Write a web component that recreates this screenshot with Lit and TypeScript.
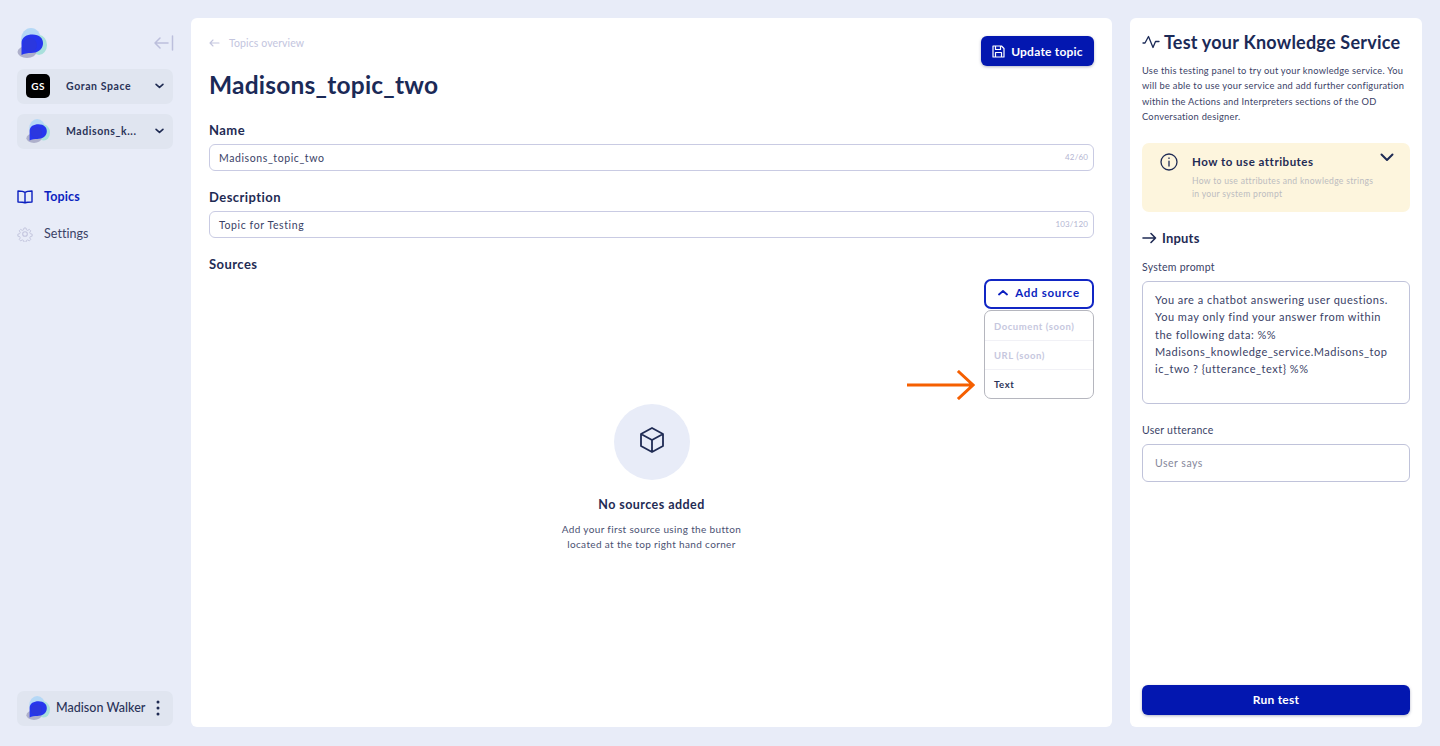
import { LitElement, html, css, svg } from 'lit';
import { customElement } from 'lit/decorators.js';

// Brand blob, drawn on a 30x30 box and scaled by the caller.
const logo = (size: number) => html`
  <svg width=${size} height=${size} viewBox="0 0 30 30">
    <ellipse cx="14" cy="11.5" rx="10" ry="11.5" fill="#b5d8f6" />
    <ellipse cx="22" cy="17" rx="8" ry="10" fill="#a9e0dc" />
    <ellipse cx="10" cy="24" rx="9.500" ry="6" fill="#aeb0cb" />
    ${svg`<path d="M4.500 27 V15 C4.500 9 10 6.500 15.500 6.500 C22.500 6.500 26.500 10.500 26 16 C25.500 22 20 25 14 25 C11 25 7 25.500 4.500 27Z" fill="#2636ee" />`}
    <circle cx="13" cy="17" r="7" fill="#2f38d0" opacity="0.5" />
  </svg>
`;

const chevronDown = html`
  <svg width="9" height="6" viewBox="0 0 10 7" fill="none" stroke="#1e2a52" stroke-width="1.900" stroke-linecap="round" stroke-linejoin="round">
    <path d="M1 1.500 L5 5 L9 1.500" />
  </svg>
`;

@customElement('app-root')
export class AppRoot extends LitElement {
  static styles = css`
    :host {
      display: block;
      height: 746px;
      overflow: hidden;
      background: #e8ecf8;
      font-family: Lato, 'Noto Sans', sans-serif;
      color: #1e2a52;
    }

    .page {
      display: flex;
      height: 746px;
      box-sizing: border-box;
      padding: 18px 18px 19px 0;
    }

    /* sidebar */
    .sidebar {
      width: 191px;
      flex: none;
      box-sizing: border-box;
      padding: 10px 18px 0 17px;
      display: flex;
      flex-direction: column;
    }

    .brand {
      display: flex;
      align-items: center;
      justify-content: space-between;
      height: 30px;
      margin-bottom: 11px;
    }

    .brand .collapse {
      margin-right: -1px;
    }

    .selector {
      display: flex;
      align-items: center;
      height: 34.500px;
      margin-bottom: 10.500px;
      padding: 0 9px 0 9px;
      border-radius: 7px;
      background: #e0e5f0;
      font-size: 10.500px;
      font-weight: 700;
      letter-spacing: 0.58px;
      color: #2a3358;
    }

    .selector .thumb {
      width: 24px;
      height: 24px;
      margin-right: 16px;
      flex: none;
      display: flex;
      align-items: center;
      justify-content: center;
    }

    .selector .gs {
      background: #000;
      border-radius: 5px;
      color: #fff;
      font-size: 10px;
      letter-spacing: 0.5px;
    }

    .selector .label {
      flex: 1;
    }

    .nav {
      margin-top: 29px;
      display: flex;
      flex-direction: column;
      gap: 20px;
    }

    .nav a {
      display: flex;
      align-items: center;
      gap: 11px;
      height: 17px;
      font-size: 12.500px;
      letter-spacing: 0.05px;
      color: #3a4266;
    }

    .nav a.active {
      color: #0b1fc0;
      font-weight: 700;
      letter-spacing: 0.15px;
    }

    .user {
      margin-top: auto;
      margin-bottom: 1px;
      height: 35px;
      display: flex;
      align-items: center;
      padding: 0 13px 2px 9px;
      box-sizing: border-box;
      border-radius: 7px;
      background: #e0e5f0;
      font-size: 12.500px;
      letter-spacing: 0.02px;
      font-weight: 500;
      color: #2a3358;
    }

    .user .name {
      flex: 1;
      margin-left: 6px;
    }

    /* main panel */
    .main {
      width: 921px;
      flex: none;
      box-sizing: border-box;
      padding: 18px;
      background: #fff;
      border-radius: 6px;
      display: flex;
      flex-direction: column;
    }

    .top {
      display: flex;
      justify-content: space-between;
      height: 30px;
    }

    .crumb {
      display: flex;
      align-items: center;
      gap: 9px;
      height: 14px;
      font-size: 10.500px;
      letter-spacing: 0.1px;
      color: #c3c5de;
    }

    .btn {
      display: flex;
      align-items: center;
      justify-content: center;
      background: #0317b0;
      color: #fff;
      border-radius: 6px;
      font-size: 12px;
      font-weight: 700;
      letter-spacing: 0.22px;
      box-shadow: 0 1px 3px rgba(30, 40, 90, 0.35);
    }

    .btn.update {
      width: 113px;
      height: 30px;
      gap: 6px;
    }

    h1 {
      margin: 4px 0 0;
      height: 30px;
      line-height: 30px;
      font-size: 24.500px;
      font-weight: 700;
      letter-spacing: 0.22px;
      color: #1b2a57;
    }

    .field-label {
      margin-top: 21px;
      height: 18px;
      line-height: 18px;
      font-size: 13px;
      font-weight: 700;
      letter-spacing: 0.45px;
      color: #1f2b54;
    }

    .field-label.next {
      margin-top: 17px;
    }

    .input {
      margin-top: 5px;
      height: 27px;
      box-sizing: border-box;
      padding: 0 5px 0 9px;
      border: 1px solid #c9cbe3;
      border-radius: 6px;
      display: flex;
      align-items: center;
      justify-content: space-between;
      font-size: 10.500px;
      letter-spacing: 0.6px;
      color: #3a4266;
    }

    .count {
      font-size: 8px;
      letter-spacing: 0.15px;
      color: #b4b6d2;
      margin-top: -2px;
    }

    .sources-head {
      margin-top: 17px;
    }

    .add-wrap {
      position: relative;
      height: 29px;
      margin-top: 6px;
      display: flex;
      justify-content: flex-end;
    }

    .add {
      width: 110px;
      height: 30px;
      box-sizing: border-box;
      padding-bottom: 3px;
      border: 2px solid #1126c4;
      border-radius: 7px;
      display: flex;
      align-items: center;
      justify-content: center;
      gap: 7px;
      color: #0b1fc0;
      font-size: 11.500px;
      font-weight: 700;
      letter-spacing: 0.7px;
    }

    .menu {
      position: absolute;
      top: 31px;
      right: 0;
      width: 110px;
      height: 89px;
      box-sizing: border-box;
      padding-top: 1px;
      border: 1px solid #b5b6be;
      border-radius: 7px;
      background: #fff;
      font-size: 9.500px;
      font-weight: 700;
      letter-spacing: 0.55px;
    }

    .menu div {
      height: 29px;
      box-sizing: border-box;
      padding-left: 9px;
      display: flex;
      align-items: center;
      color: #c6c7de;
      border-bottom: 1px solid #f1f1f6;
    }

    .menu div:last-child {
      border-bottom: none;
      color: #2a3358;
    }

    .pointer {
      position: absolute;
      top: 91px;
      right: 119px;
    }

    .empty {
      margin-top: 96px;
      display: flex;
      flex-direction: column;
      align-items: center;
      text-align: center;
    }

    .empty .disc {
      width: 76px;
      height: 76px;
      box-sizing: border-box;
      padding-bottom: 4px;
      border-radius: 50%;
      background: #e8ecf8;
      display: flex;
      align-items: center;
      justify-content: center;
    }

    .empty h2 {
      margin: 16px 0 0;
      font-size: 12.500px;
      line-height: 17px;
      font-weight: 700;
      letter-spacing: 0.45px;
      color: #1f2b54;
    }

    .empty p {
      margin: 9px 0 0;
      font-size: 10px;
      line-height: 15px;
      letter-spacing: 0.35px;
      color: #4a5172;
    }

    /* test panel */
    .test {
      width: 292px;
      flex: none;
      margin-left: 18px;
      box-sizing: border-box;
      padding: 12px;
      background: #fff;
      border-radius: 6px;
      display: flex;
      flex-direction: column;
    }

    .test-title {
      display: flex;
      align-items: center;
      gap: 4px;
      height: 24px;
      font-size: 18px;
      font-weight: 700;
      letter-spacing: 0.22px;
      color: #1b2a57;
    }

    .test-desc {
      margin: 9px 0 0;
      font-size: 9.300px;
      line-height: 15.300px;
      letter-spacing: 0.25px;
      color: #3a4266;
    }

    .callout {
      margin-top: 19px;
      height: 69px;
      box-sizing: border-box;
      padding: 10px 16px 0 18px;
      display: flex;
      gap: 14px;
      background: #fdf5dd;
      border-radius: 7px;
    }

    .callout svg {
      flex: none;
    }

    .callout .body {
      flex: 1;
      min-width: 0;
      white-space: nowrap;
    }

    .callout h3 {
      margin: 0;
      font-size: 11.500px;
      line-height: 18px;
      font-weight: 700;
      letter-spacing: 0.5px;
      color: #1f2b54;
    }

    .callout p {
      margin: 4px 0 0;
      font-size: 8.600px;
      line-height: 13px;
      letter-spacing: 0.3px;
      color: #bcbcc0;
    }

    .inputs-head {
      margin-top: 17px;
      height: 17px;
      display: flex;
      align-items: center;
      gap: 5px;
      font-size: 13px;
      font-weight: 700;
      letter-spacing: 0.2px;
      color: #1f2b54;
    }

    .small-label {
      margin-top: 14px;
      height: 14px;
      line-height: 14px;
      font-size: 10.500px;
      letter-spacing: 0.25px;
      color: #3a4266;
    }

    .prompt {
      margin-top: 7px;
      height: 123px;
      box-sizing: border-box;
      padding: 9px 20px 10px 12px;
      border: 1px solid #c0c3da;
      border-radius: 6px;
      font-size: 11px;
      line-height: 17.300px;
      letter-spacing: 0.5px;
      overflow-wrap: anywhere;
      color: #3a4266;
    }

    .utter-label {
      margin-top: 19px;
    }

    .says {
      margin-top: 7px;
      height: 38px;
      box-sizing: border-box;
      padding-left: 12px;
      border: 1px solid #c0c3da;
      border-radius: 6px;
      display: flex;
      align-items: center;
      font-size: 10.500px;
      letter-spacing: 0.5px;
      color: #85879a;
    }

    .btn.run {
      margin-top: auto;
      height: 30px;
      box-sizing: border-box;
      padding-bottom: 1px;
    }
  `;

  render() {
    return html`
      <div class="page">
        <aside class="sidebar">
          <div class="brand">
            ${logo(30)}
            <svg class="collapse" width="20" height="16" viewBox="0 0 20 16" fill="none" stroke="#bcbfdc" stroke-width="1.500" stroke-linecap="round" stroke-linejoin="round">
              <path d="M1 8 H14 M6 3 L1 8 L6 13 M18.500 1 V15" />
            </svg>
          </div>
          <div class="selector">
            <span class="thumb gs">GS</span>
            <span class="label">Goran Space</span>
            ${chevronDown}
          </div>
          <div class="selector">
            <span class="thumb">${logo(24)}</span>
            <span class="label">Madisons_k...</span>
            ${chevronDown}
          </div>
          <nav class="nav">
            <a class="active">
              <svg width="16" height="14" viewBox="0 0 16 14" fill="none" stroke="#0b1fc0" stroke-width="1.400" stroke-linejoin="round">
                <path d="M8 2.500 C6.500 1.200 4 1 1 1 V12 C4 12 6.500 12.200 8 13 C9.500 12.200 12 12 15 12 V1 C12 1 9.500 1.200 8 2.500 Z M8 2.500 V13" />
              </svg>
              Topics
            </a>
            <a>
              <svg width="16" height="16" viewBox="0 0 24 24" fill="none" stroke="#c3c5de" stroke-width="1.600" stroke-linejoin="round">
                <circle cx="12" cy="12" r="3.500" />
                <path d="M10.300 2 h3.400 l.6 3 2.300 1 2.600-1.700 2.400 2.400-1.700 2.600 1 2.300 3 .6 v3.400 l-3 .6-1 2.300 1.700 2.600-2.400 2.400-2.600-1.700-2.300 1-.6 3 h-3.400 l-.6-3-2.300-1-2.600 1.700-2.400-2.400 1.700-2.600-1-2.300-3-.6 v-3.400 l3-.6 1-2.300-1.700-2.600 2.400-2.400 2.600 1.700 2.300-1 z" transform="translate(1.200 1.200) scale(.9)" />
              </svg>
              Settings
            </a>
          </nav>
          <div class="user">
            ${logo(24)}
            <span class="name">Madison Walker</span>
            <svg width="4" height="16" viewBox="0 0 4 16" fill="#1e2a52">
              <circle cx="2" cy="2" r="1.500" /><circle cx="2" cy="8" r="1.500" /><circle cx="2" cy="14" r="1.500" />
            </svg>
          </div>
        </aside>

        <main class="main">
          <div class="top">
            <div class="crumb">
              <svg width="11" height="8" viewBox="0 0 11 8" fill="none" stroke="#c3c5de" stroke-width="1.100" stroke-linecap="round" stroke-linejoin="round">
                <path d="M1 4 H10 M4 1 L1 4 L4 7" />
              </svg>
              Topics overview
            </div>
            <div class="btn update">
              <svg width="13" height="13" viewBox="0 0 13 13" fill="none" stroke="#fff" stroke-width="1.200" stroke-linejoin="round">
                <path d="M1 1 H9.500 L12 3.500 V12 H1 Z M3.500 1 V4.500 H8.500 V1 M3.500 12 V7.500 H9.500 V12" />
              </svg>
              Update topic
            </div>
          </div>
          <h1>Madisons_topic_two</h1>

          <div class="field-label">Name</div>
          <div class="input">Madisons_topic_two<span class="count">42/60</span></div>
          <div class="field-label next">Description</div>
          <div class="input">Topic for Testing<span class="count">103/120</span></div>

          <div class="field-label sources-head">Sources</div>
          <div class="add-wrap">
            <div class="add">
              <svg width="10" height="7" viewBox="0 0 10 7" fill="none" stroke="#0b1fc0" stroke-width="1.800" stroke-linecap="round" stroke-linejoin="round">
                <path d="M1 5.500 L5 2 L9 5.500" />
              </svg>
              Add source
            </div>
            <div class="menu">
              <div>Document (soon)</div>
              <div>URL (soon)</div>
              <div>Text</div>
            </div>
            <svg class="pointer" width="68" height="30" viewBox="0 0 68 30" fill="none" stroke="#f55f00" stroke-width="3" stroke-linecap="square">
              <path d="M1 15 H65 M52 2 L66 15 L52 28" />
            </svg>
          </div>

          <div class="empty">
            <div class="disc">
              <svg width="28" height="28" viewBox="0 0 28 28" fill="none" stroke="#1f2b54" stroke-width="1.800" stroke-linejoin="round">
                <path d="M14 2 L25 8 V20 L14 26 L3 20 V8 Z M3 8 L14 14 L25 8 M14 14 V26" />
              </svg>
            </div>
            <h2>No sources added</h2>
            <p>Add your first source using the button<br />located at the top right hand corner</p>
          </div>
        </main>

        <section class="test">
          <div class="test-title">
            <svg width="18" height="14" viewBox="0 0 18 14" fill="none" stroke="#1b2a57" stroke-width="1.300" stroke-linecap="round" stroke-linejoin="round">
              <path d="M1 8 L3 8 L6.500 1.500 L11 12.500 L13.500 6.500 L17 6.500" />
            </svg>
            Test your Knowledge Service
          </div>
          <p class="test-desc">
            Use this testing panel to try out your knowledge service. You will be able to use your service and add further configuration within the Actions and Interpreters sections of the OD Conversation designer.
          </p>
          <div class="callout">
            <svg width="18" height="18" viewBox="0 0 18 18" fill="none" stroke="#1f2b54" stroke-width="1.300" stroke-linecap="round">
              <circle cx="9" cy="9" r="8" />
              <path d="M9 8.200 V13 M9 5 V5.400" />
            </svg>
            <div class="body">
              <h3>How to use attributes</h3>
              <p>How to use attributes and knowledge strings<br />in your system prompt</p>
            </div>
            <svg width="14" height="9" viewBox="0 0 14 9" fill="none" stroke="#1f2b54" stroke-width="2" stroke-linecap="round" stroke-linejoin="round">
              <path d="M1.500 1.500 L7 7 L12.500 1.500" />
            </svg>
          </div>
          <div class="inputs-head">
            <svg width="15" height="12" viewBox="0 0 15 12" fill="none" stroke="#1f2b54" stroke-width="1.600" stroke-linecap="round" stroke-linejoin="round">
              <path d="M1 6 H13.500 M9 1.500 L13.500 6 L9 10.500" />
            </svg>
            Inputs
          </div>
          <div class="small-label">System prompt</div>
          <div class="prompt">You are a chatbot answering user questions. You may only find your answer from within the following data: %% Madisons_knowledge_service.Madisons_topic_two ? {utterance_text} %%</div>
          <div class="small-label utter-label">User utterance</div>
          <div class="says">User says</div>
          <div class="btn run">Run test</div>
        </section>
      </div>
    `;
  }
}
